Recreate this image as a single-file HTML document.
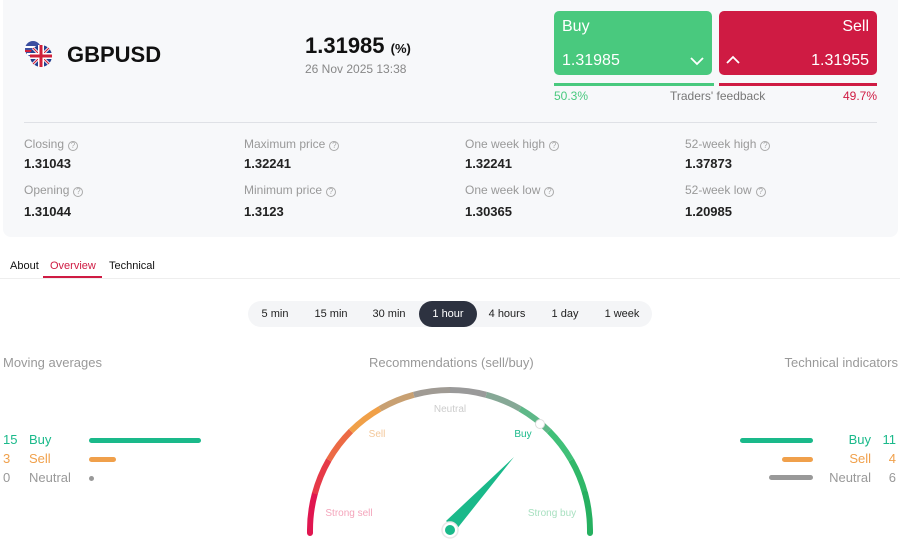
<!DOCTYPE html>
<html><head><meta charset="utf-8"><style>
*{margin:0;padding:0;box-sizing:border-box}
body{width:900px;height:547px;background:#fff;font-family:"Liberation Sans",Arial,sans-serif;position:relative;overflow:hidden;color:#111}
.a{position:absolute;white-space:nowrap}
.panel{position:absolute;left:3px;top:0;width:895px;height:237px;background:#f7f8fa;border-radius:0 0 8px 8px}
.lbl{font-size:12px;color:#999}
.val{font-size:13px;font-weight:bold;color:#222}
.q{display:inline-block;width:10px;height:10px;border:1px solid #aaa;border-radius:50%;font-size:8px;line-height:8px;text-align:center;color:#aaa;margin-left:4px;vertical-align:0}
.tf{position:absolute;top:301px;left:248px;width:404px;height:26px;background:#f4f5f7;border-radius:13px}
.tf span{position:absolute;top:0;height:26px;line-height:26px;font-size:11px;color:#222;text-align:center}
</style></head><body>
<div class="panel"></div>
<svg class="a" style="left:23px;top:40px" width="32" height="30" viewBox="0 0 32 30">
<circle cx="10" cy="9" r="8" fill="#3c4fa0"/><rect x="2" y="6" width="16" height="2" fill="#fff"/><rect x="2" y="10" width="16" height="2" fill="#d0203a"/><rect x="4" y="13" width="12" height="2" fill="#fff"/>
<circle cx="18" cy="16" r="11" fill="#233f8f"/>
<path d="M10 8 L26 24 M26 8 L10 24" stroke="#fff" stroke-width="3"/>
<path d="M10 8 L26 24 M26 8 L10 24" stroke="#d0203a" stroke-width="1.2"/>
<rect x="7" y="13" width="22" height="6" fill="#fff"/><rect x="15" y="5" width="6" height="22" fill="#fff"/>
<rect x="7" y="14.5" width="22" height="3" fill="#d0203a"/><rect x="16.5" y="5" width="3" height="22" fill="#d0203a"/>
</svg>
<div class="a" style="left:67px;top:42px;font-size:22px;font-weight:bold">GBPUSD</div>
<div class="a" style="left:305px;top:33px;font-size:22px;font-weight:bold">1.31985 <span style="font-size:13px">(%)</span></div>
<div class="a" style="left:305px;top:62px;font-size:12px;color:#888">26 Nov 2025 13:38</div>

<div class="a" style="left:554px;top:11px;width:158px;height:64px;background:#49c97e;border-radius:5px;color:#fff">
<div class="a" style="left:8px;top:7px;font-size:16px">Buy</div>
<div class="a" style="left:8px;top:41px;font-size:16px">1.31985</div>
<svg class="a" style="left:136px;top:45px" width="14" height="10"><path d="M1 2 L7 8 L13 2" stroke="#fff" stroke-width="1.8" fill="none"/></svg>
</div>
<div class="a" style="left:719px;top:11px;width:158px;height:64px;background:#cf1b43;border-radius:5px;color:#fff">
<div class="a" style="right:8px;top:7px;font-size:16px">Sell</div>
<div class="a" style="right:8px;top:41px;font-size:16px">1.31955</div>
<svg class="a" style="left:7px;top:44px" width="14" height="10"><path d="M1 8 L7 2 L13 8" stroke="#fff" stroke-width="1.8" fill="none"/></svg>
</div>
<div class="a" style="left:554px;top:83px;width:160px;height:3px;background:#49c97e"></div>
<div class="a" style="left:719px;top:83px;width:158px;height:3px;background:#cf1b43"></div>
<div class="a" style="left:554px;top:89px;font-size:12px;color:#49c97e">50.3%</div>
<div class="a" style="left:670px;top:89px;font-size:12px;color:#777">Traders' feedback</div>
<div class="a" style="right:23px;top:89px;font-size:12px;color:#cf1b43">49.7%</div>
<div class="a" style="left:24px;top:122px;width:853px;height:1px;background:#dfe1e6"></div>

<div class="a lbl" style="left:24px;top:137px">Closing<span class="q">?</span></div>
<div class="a val" style="left:24px;top:156px">1.31043</div>
<div class="a lbl" style="left:24px;top:183px">Opening<span class="q">?</span></div>
<div class="a val" style="left:24px;top:204px">1.31044</div>
<div class="a lbl" style="left:244px;top:137px">Maximum price<span class="q">?</span></div>
<div class="a val" style="left:244px;top:156px">1.32241</div>
<div class="a lbl" style="left:244px;top:183px">Minimum price<span class="q">?</span></div>
<div class="a val" style="left:244px;top:204px">1.3123</div>
<div class="a lbl" style="left:465px;top:137px">One week high<span class="q">?</span></div>
<div class="a val" style="left:465px;top:156px">1.32241</div>
<div class="a lbl" style="left:465px;top:183px">One week low<span class="q">?</span></div>
<div class="a val" style="left:465px;top:204px">1.30365</div>
<div class="a lbl" style="left:685px;top:137px">52-week high<span class="q">?</span></div>
<div class="a val" style="left:685px;top:156px">1.37873</div>
<div class="a lbl" style="left:685px;top:183px">52-week low<span class="q">?</span></div>
<div class="a val" style="left:685px;top:204px">1.20985</div>

<div class="a" style="left:0;top:278px;width:900px;height:1px;background:#eee"></div>
<div class="a" style="left:10px;top:260px;font-size:11px">About</div>
<div class="a" style="left:50px;top:260px;font-size:11px;color:#cf1b43">Overview</div>
<div class="a" style="left:43px;top:276px;width:59px;height:2px;background:#cf1b43"></div>
<div class="a" style="left:109px;top:260px;font-size:11px">Technical</div>

<div class="tf">
<span style="left:6px;width:42px">5 min</span>
<span style="left:62px;width:42px">15 min</span>
<span style="left:120px;width:42px">30 min</span>
<span style="left:171px;width:58px;background:#2d3240;color:#fff;border-radius:13px">1 hour</span>
<span style="left:237px;width:44px">4 hours</span>
<span style="left:297px;width:40px">1 day</span>
<span style="left:352px;width:44px">1 week</span>
</div>

<div class="a" style="left:3px;top:355px;font-size:13px;color:#999">Moving averages</div>
<div class="a" style="left:369px;top:355px;font-size:13px;color:#999">Recommendations (sell/buy)</div>
<div class="a" style="right:2px;top:355px;font-size:13px;color:#999">Technical indicators</div>

<div class="a" style="left:3px;top:432px;font-size:13px;color:#1ab98a">15</div>
<div class="a" style="left:29px;top:432px;font-size:13px;color:#1ab98a">Buy</div>
<div class="a" style="left:89px;top:438px;width:112px;height:5px;border-radius:3px;background:#1ab98a"></div>
<div class="a" style="left:3px;top:451px;font-size:13px;color:#f0a04b">3</div>
<div class="a" style="left:29px;top:451px;font-size:13px;color:#f0a04b">Sell</div>
<div class="a" style="left:89px;top:457px;width:27px;height:5px;border-radius:3px;background:#f0a04b"></div>
<div class="a" style="left:3px;top:470px;font-size:13px;color:#999">0</div>
<div class="a" style="left:29px;top:470px;font-size:13px;color:#999">Neutral</div>
<div class="a" style="left:89px;top:476px;width:5px;height:5px;border-radius:3px;background:#999"></div>

<div class="a" style="left:740px;top:438px;width:73px;height:5px;border-radius:3px;background:#1ab98a"></div>
<div class="a" style="right:29px;top:432px;font-size:13px;color:#1ab98a">Buy</div>
<div class="a" style="right:4px;top:432px;font-size:13px;color:#1ab98a">11</div>
<div class="a" style="left:782px;top:457px;width:31px;height:5px;border-radius:3px;background:#f0a04b"></div>
<div class="a" style="right:29px;top:451px;font-size:13px;color:#f0a04b">Sell</div>
<div class="a" style="right:4px;top:451px;font-size:13px;color:#f0a04b">4</div>
<div class="a" style="left:769px;top:475px;width:44px;height:5px;border-radius:3px;background:#999"></div>
<div class="a" style="right:29px;top:470px;font-size:13px;color:#999">Neutral</div>
<div class="a" style="right:4px;top:470px;font-size:13px;color:#999">6</div>

<svg class="a" style="left:0;top:0" width="900" height="547" viewBox="0 0 900 547">
<g fill="none" stroke-width="6">
<path d="M310 533 L310 530 A140 140 0 0 1 314.8 493.8" stroke="#e01650" stroke-linecap="round"/>
<path d="M314.8 493.8 A140 140 0 0 1 328.8 460" stroke="#e63a48"/>
<path d="M328.8 460 A140 140 0 0 1 351 431" stroke="#ec6a45"/>
<path d="M351 431 A140 140 0 0 1 380 408.8" stroke="#f0a048"/>
<path d="M380 408.8 A140 140 0 0 1 413.8 394.8" stroke="#c8a072"/>
<path d="M413.8 394.8 A140 140 0 0 1 450 390" stroke="#a09b94"/>
<path d="M450 390 A140 140 0 0 1 486.2 394.8" stroke="#9a9a9a"/>
<path d="M486.2 394.8 A140 140 0 0 1 520 408.8" stroke="#86a896"/>
<path d="M520 408.8 A140 140 0 0 1 549 431" stroke="#5eb888"/>
<path d="M549 431 A140 140 0 0 1 571.2 460" stroke="#40c078"/>
<path d="M571.2 460 A140 140 0 0 1 585.2 493.8" stroke="#30b868"/>
<path d="M585.2 493.8 A140 140 0 0 1 590 530 L590 533" stroke="#26b060" stroke-linecap="round"/>
</g>
<circle cx="540" cy="424" r="4.5" fill="#fff" stroke="#ddd" stroke-width="1"/>
<g font-family="Liberation Sans, Arial, sans-serif" font-size="10" text-anchor="middle">
<text x="450" y="412" fill="#ccc">Neutral</text>
<text x="377" y="437" fill="#f3c79a">Sell</text>
<text x="523" y="437" fill="#1ab98a">Buy</text>
<text x="349" y="516" fill="#f4a5bb">Strong sell</text>
<text x="552" y="516" fill="#a8e0c0">Strong buy</text>
</g>
<path d="M514 457 L456 530 L446 521 Z" fill="#1ab98a"/>
<circle cx="450" cy="530" r="8" fill="#fff" stroke="#e8e8e8" stroke-width="1.5"/>
<circle cx="450" cy="530" r="5" fill="#1ab98a"/>
</svg>
</body></html>
